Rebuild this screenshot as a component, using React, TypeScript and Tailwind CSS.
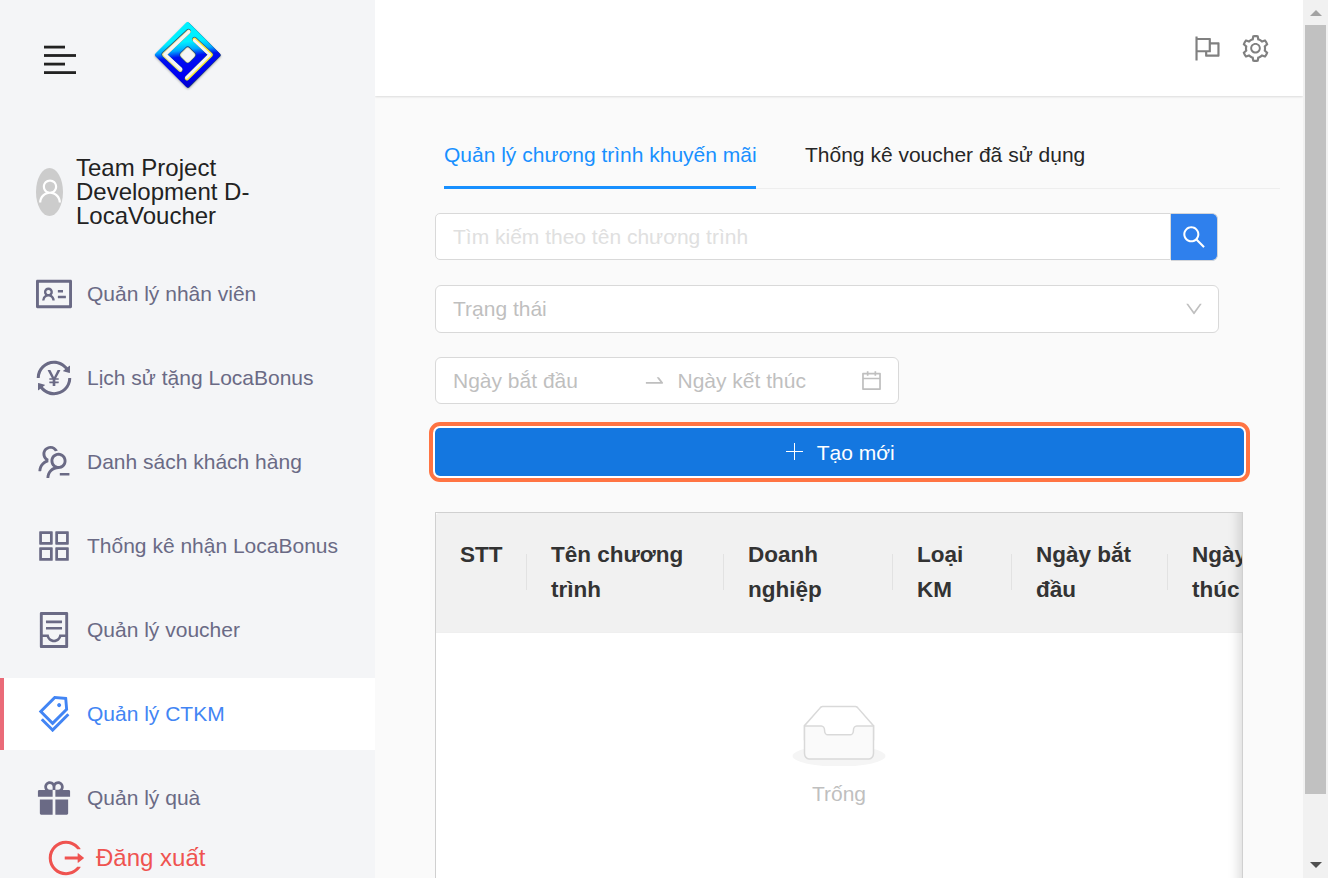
import {
  AiFillGift,
  AiOutlineAppstore,
  AiOutlineCalendar,
  AiOutlineContainer,
  AiOutlineDown,
  AiOutlineFlag,
  AiOutlineIdcard,
  AiOutlineLogout,
  AiOutlineSearch,
  AiOutlineSetting,
  AiOutlineSwapRight,
  AiOutlineTags,
  AiOutlineTransaction,
  AiOutlineUser,
  AiOutlineUsergroupDelete,
} from 'react-icons/ai';
import type { IconType } from 'react-icons';

const menu: { label: string; icon: IconType; active?: boolean }[] = [
  { label: 'Quản lý nhân viên', icon: AiOutlineIdcard },
  { label: 'Lịch sử tặng LocaBonus', icon: AiOutlineTransaction },
  { label: 'Danh sách khách hàng', icon: AiOutlineUsergroupDelete },
  { label: 'Thống kê nhận LocaBonus', icon: AiOutlineAppstore },
  { label: 'Quản lý voucher', icon: AiOutlineContainer },
  { label: 'Quản lý CTKM', icon: AiOutlineTags, active: true },
  { label: 'Quản lý quà', icon: AiFillGift },
];

const columns = [
  { label: 'STT', width: 'w-[91px]' },
  { label: 'Tên chương trình', width: 'w-[197px]' },
  { label: 'Doanh nghiệp', width: 'w-[169px]' },
  { label: 'Loại KM', width: 'w-[119px]' },
  { label: 'Ngày bắt đầu', width: 'w-[156px]' },
  { label: 'Ngày kết thúc', width: 'w-[156px]' },
];

// Ant Design glyphs have a 64-unit margin inside 1024; this trims it.
function Glyph({ icon: Icon, size, className }: { icon: IconType; size: number; className?: string }) {
  return <Icon size={size} viewBox="64 64 896 896" className={`shrink-0 ${className ?? ''}`} />;
}

function Logo() {
  return (
    <svg width="76" height="76" viewBox="0 0 76 76" className="ml-[73px] mt-[17px] shrink-0 drop-shadow-[0_1px_1px_rgba(0,0,0,0.3)]">
      <defs>
        <linearGradient id="logoFill" gradientUnits="userSpaceOnUse" x1="34" y1="5" x2="42" y2="71">
          <stop offset="0.05" stopColor="#00f2ff" />
          <stop offset="0.3" stopColor="#00f0ff" />
          <stop offset="0.42" stopColor="#00a8ff" />
          <stop offset="0.52" stopColor="#0010f0" />
          <stop offset="0.8" stopColor="#0000f4" />
          <stop offset="1" stopColor="#0000c8" />
        </linearGradient>
      </defs>
      <g strokeLinecap="round" strokeLinejoin="round">
        <path d="M39.100 7.600 L69.700 38.200 L39.100 68.800 L8.500 38.200 Z" fill="#1c3f78" stroke="#1c3f78" strokeWidth="4" />
        <path d="M38.500 7.100 L69.200 37.800 L38.500 68.400 L7.900 37.800 Z" fill="url(#logoFill)" stroke="url(#logoFill)" strokeWidth="4" />
        <g fill="none">
          <path d="M39.400 14.300 L14.700 37.300 L31.300 52.700" stroke="#1d5c86" strokeWidth="5" />
          <path d="M39.600 14.800 L15.200 37.600 L31.300 52.700" stroke="#efe28a" strokeWidth="4.200" />
          <path d="M39.800 14.800 L15.900 37.500 L31.700 52" stroke="#f4f5f7" strokeWidth="3.200" />
          <path d="M45.600 22.300 L61.900 37.600 L38 61.200" stroke="#2a5590" strokeWidth="5" />
          <path d="M45.600 22.700 L61.700 37.700 L38 61.200" stroke="#ffec3d" strokeWidth="4.200" />
          <path d="M45.300 23.500 L60.700 37.700 L37.500 60.500" stroke="#f4f5f7" strokeWidth="2.700" />
        </g>
        <path d="M38.700 32.800 L43.700 37.800 L38.700 42.800 L33.700 37.800 Z" fill="#1c4a86" stroke="#1c4a86" strokeWidth="6.600" />
        <path d="M38.700 33.200 L43.500 38 L38.700 42.800 L33.900 38 Z" fill="#e8e6c0" stroke="#e8e6c0" strokeWidth="5.400" />
        <path d="M38.900 33.800 L43.300 38.200 L38.900 42.600 L34.500 38.200 Z" fill="#f4f5f7" stroke="#f4f5f7" strokeWidth="4.400" />
      </g>
    </svg>
  );
}

function MenuGlyph() {
  return (
    <svg width="32" height="30" viewBox="0 0 32 30" className="ml-[44px] mt-[45px] shrink-0" fill="#222">
      <rect y="0.700" width="21" height="2.800" />
      <rect y="9.100" width="32" height="2.800" />
      <rect y="17.700" width="21" height="2.800" />
      <rect y="26.200" width="32" height="2.800" />
    </svg>
  );
}

function PlusGlyph() {
  return (
    <svg width="17" height="17" viewBox="0 0 17 17" fill="currentColor" className="-mt-[1px] shrink-0" shapeRendering="crispEdges">
      <rect x="0" y="8" width="17" height="1" />
      <rect x="8" y="0" width="1" height="17" />
    </svg>
  );
}

function EmptyBox() {
  return (
    <svg width="96" height="61.500" viewBox="0 0 64 41" className="shrink-0">
      <g transform="translate(0 1)" fill="none" fillRule="evenodd">
        <ellipse fill="#f5f5f5" cx="32" cy="33" rx="31" ry="7" />
        <g fillRule="nonzero" stroke="#d9d9d9">
          <path d="M55 12.760L44.854 1.258C44.367.474 43.656 0 42.907 0H21.093c-.749 0-1.460.474-1.947 1.257L9 12.761V22h46v-9.240z" />
          <path d="M41.613 15.931c0-1.605.994-2.930 2.227-2.931H55v18.137C55 33.260 53.680 35 52.050 35h-40.100C10.320 35 9 33.259 9 31.137V13h11.160c1.233 0 2.227 1.323 2.227 2.928v.022c0 1.605 1.005 2.901 2.237 2.901h14.752c1.232 0 2.237-1.308 2.237-2.913v-.007z" fill="#fafafa" />
        </g>
      </g>
    </svg>
  );
}

function Sidebar() {
  return (
    <aside className="flex w-[375px] shrink-0 flex-col overflow-hidden bg-[#f4f5f7]">
      <div className="flex h-[156px] shrink-0 items-start">
        <MenuGlyph />
        <Logo />
      </div>
      <div className="flex h-[72px] shrink-0 items-center pl-9">
        <div className="flex h-12 w-[27px] shrink-0 items-center justify-center overflow-hidden rounded-[50%] bg-[#ccc] pb-[3px] text-white">
          <Glyph icon={AiOutlineUser} size={26} />
        </div>
        <div className="ml-[13px] w-[190px] text-2xl leading-6 text-[#222]">Team Project Development D-LocaVoucher</div>
      </div>
      <nav className="mt-[30px] flex shrink-0 flex-col gap-3">
        {menu.map(({ label, icon, active }) => (
          <a
            key={label}
            className={
              active
                ? 'flex h-[72px] items-center border-l-4 border-[#ea6b78] bg-white pl-8 text-[#4285f4]'
                : 'flex h-[72px] items-center pl-9 text-[#6a6a85]'
            }
          >
            <Glyph icon={icon} size={36} />
            <span className="ml-[15px] whitespace-nowrap text-[21px]">{label}</span>
          </a>
        ))}
      </nav>
      <a className="mt-[6px] flex h-9 shrink-0 items-center pl-12 text-[#ef5350]">
        <Glyph icon={AiOutlineLogout} size={36} />
        <span className="ml-3 text-2xl">Đăng xuất</span>
      </a>
    </aside>
  );
}

function PromotionTable() {
  return (
    <div className="relative mt-9 h-[400px] w-[808px] shrink-0 overflow-hidden border border-[#d0d0d0] bg-white">
      <div className="flex h-[120px] w-[888px] rounded-tl-[3px] border-b border-[#efefef] bg-[#f1f1f1]">
        {columns.map((column) => (
          <div key={column.label} className={`${column.width} flex shrink-0 items-center`}>
            <div className="h-full flex-1 pt-6 pl-6 pr-[18px] text-[22.500px] font-bold leading-[35px] text-[#333]">{column.label}</div>
            <div className="-mt-[2px] h-9 w-[1.500px] shrink-0 bg-[#e2e2e2]" />
          </div>
        ))}
      </div>
      <div className="flex flex-col items-center pt-[71.500px]">
        <EmptyBox />
        <span className="mt-[10.500px] text-[21px] leading-[33px] text-[#bfbfbf]">Trống</span>
      </div>
      <div className="absolute inset-y-0 right-0 w-10 shadow-[inset_-15px_0_12px_-12px_rgba(0,0,0,0.15)]" />
    </div>
  );
}

function Scrollbar() {
  return (
    <div className="flex w-[25px] shrink-0 flex-col items-center bg-[#f1f1f1]">
      <div className="flex h-[25px] items-center justify-center">
        <svg width="12" height="6" viewBox="0 0 12 6" fill="#a3a3a3"><path d="M6 0l6 6H0z" /></svg>
      </div>
      <div className="h-[769px] w-[21px] bg-[#c1c1c1]" />
      <div className="flex flex-1 items-end pb-[10px]">
        <svg width="12" height="6" viewBox="0 0 12 6" fill="#505050"><path d="M0 0h12L6 6z" /></svg>
      </div>
    </div>
  );
}

export default function App() {
  return (
    <div className="flex h-[878px] w-[1328px] overflow-hidden bg-[#fafafa] font-['Liberation_Sans',Arial,sans-serif]">
      <Sidebar />
      <main className="flex min-w-0 flex-1 flex-col overflow-hidden">
        <header className="flex h-24 shrink-0 items-center justify-end gap-[21px] bg-white pr-[34px] pt-px text-[#808080] shadow-[0_1px_2px_rgba(0,0,0,0.12)]">
          <Glyph icon={AiOutlineFlag} size={27} />
          <Glyph icon={AiOutlineSetting} size={27} />
        </header>
        <section className="flex flex-col pl-[60px]">
          <div className="ml-[9px] mt-[26px] flex h-[67px] w-[836px] shrink-0 gap-[49px] border-b border-[#eee] text-[21px] leading-[33px]">
            <div className="h-[67px] w-[312px] whitespace-nowrap border-b-[3px] border-[#1890ff] pt-[16px] text-[#1890ff]">Quản lý chương trình khuyến mãi</div>
            <div className="pt-[16px] text-[#262626]">Thống kê voucher đã sử dụng</div>
          </div>
          <div className="mt-6 flex h-[48px] w-[783px] text-[21px]">
            <div className="flex h-[47px] flex-1 items-center rounded-l-[5px] border border-[#d9d9d9] bg-white pl-[17px] text-[#e0e0e0]">Tìm kiếm theo tên chương trình</div>
            <button className="flex h-12 w-[47px] items-center justify-center rounded-r-[6px] border border-l-0 border-[#d3d5d9] bg-[#2f80ed] text-white">
              <Glyph icon={AiOutlineSearch} size={24} />
            </button>
          </div>
          <div className="mt-6 flex h-12 w-[784px] items-center justify-between rounded-[6px] border border-[#d9d9d9] bg-white pl-[17px] pr-[15px] text-[21px] text-[#bfbfbf]">
            <span>Trạng thái</span>
            <Glyph icon={AiOutlineDown} size={18} />
          </div>
          <div className="mt-6 flex h-[47px] w-[464px] items-center rounded-[6px] border border-[#d9d9d9] bg-white pl-[17px] text-[21px] text-[#bfbfbf]">
            <span className="w-[190.500px]">Ngày bắt đầu</span>
            <Glyph icon={AiOutlineSwapRight} size={21} />
            <span className="ml-[13px] w-[183.500px]">Ngày kết thúc</span>
            <Glyph icon={AiOutlineCalendar} size={21} />
          </div>
          <button className="mt-6 flex h-12 w-[808.500px] items-center justify-center rounded-[5px] bg-[#1477e0] text-[21px] text-white shadow-[0_0_0_2px_#fff] outline-4 outline-offset-[2px] outline-[#ff7443]">
            <PlusGlyph />
            <span className="-mr-[2px] ml-[14px] pt-px">Tạo mới</span>
          </button>
          <PromotionTable />
        </section>
      </main>
      <Scrollbar />
    </div>
  );
}
